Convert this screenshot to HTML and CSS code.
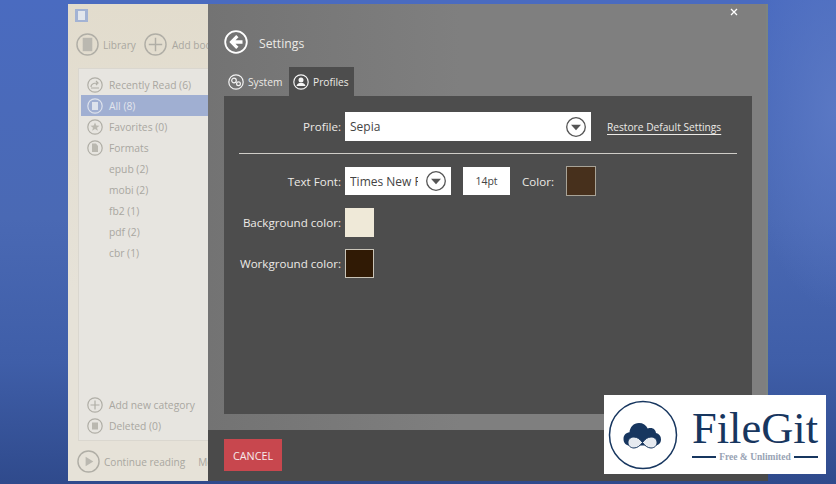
FILE: index.html
```html
<!DOCTYPE html>
<html lang="en">
<head>
<meta charset="utf-8">
<title>Settings</title>
<link rel="stylesheet" href="styles.css">
</head>
<body>
<div class="window">
  <aside class="side">
    <div class="app-icon"><span></span></div>
    <div class="tools">
      <svg class="ic22" viewBox="0 0 24 24"><circle cx="12" cy="12" r="11"/><rect class="fill" x="7" y="5" width="10" height="14"/></svg>
      <span class="tool-label">Library</span>
      <svg class="ic22 second" viewBox="0 0 24 24"><circle cx="12" cy="12" r="11"/><path d="M12 5v14M5 12h14"/></svg>
      <span class="tool-label">Add books</span>
    </div>
    <div class="list">
      <div class="row"><svg class="ic16" viewBox="0 0 16 16"><circle cx="8" cy="8" r="7.2"/><path d="M4 10c0-3 2-4 6-4M9 4l2 2-2 2M4 11h8"/></svg><span>Recently Read (6)</span></div>
      <div class="row sel"><svg class="ic16" viewBox="0 0 16 16"><circle cx="8" cy="8" r="7.2"/><rect class="fill" x="5" y="4" width="6" height="8"/></svg><span>All (8)</span></div>
      <div class="row"><svg class="ic16" viewBox="0 0 16 16"><circle cx="8" cy="8" r="7.2"/><path class="fill" d="M8 3.500l1.300 3 3.200.2-2.500 2 .9 3.100L8 10.100l-2.900 1.700.9-3.100-2.500-2 3.200-.2z"/></svg><span>Favorites (0)</span></div>
      <div class="row"><svg class="ic16" viewBox="0 0 16 16"><circle cx="8" cy="8" r="7.2"/><path class="fill" d="M5 3.500h4l2 2.500v6H5z"/></svg><span>Formats</span></div>
      <div class="row"><i></i><span>epub (2)</span></div>
      <div class="row"><i></i><span>mobi (2)</span></div>
      <div class="row"><i></i><span>fb2 (1)</span></div>
      <div class="row"><i></i><span>pdf (2)</span></div>
      <div class="row"><i></i><span>cbr (1)</span></div>
      <div class="list-end">
        <div class="row"><svg class="ic16" viewBox="0 0 16 16"><circle cx="8" cy="8" r="7.2"/><path d="M8 3.500v9M3.500 8h9"/></svg><span>Add new category</span></div>
        <div class="row"><svg class="ic16" viewBox="0 0 16 16"><circle cx="8" cy="8" r="7.2"/><rect class="fill" x="5" y="4.500" width="6" height="7"/></svg><span>Deleted (0)</span></div>
      </div>
    </div>
    <div class="foot">
      <svg class="ic22" viewBox="0 0 24 24"><circle cx="12" cy="12" r="11"/><path class="fill" d="M9 7l8 5-8 5z"/></svg>
      <span class="tool-label">Continue reading</span>
      <span class="tool-label more">More</span>
    </div>
  </aside>
  <main class="settings">
    <button class="close" aria-label="Close"><svg viewBox="0 0 8 8"><path d="M1 1l6 6M7 1l-6 6"/></svg></button>
    <header class="head">
      <svg class="back" viewBox="0 0 24 24"><circle cx="12" cy="12" r="10.800"/><path class="arrow" d="M18.500 10.300v3.400h-7l3 3-2.300 2.300L5.300 12l6.900-7 2.300 2.300-3 3z"/></svg>
      <span class="title">Settings</span>
    </header>
    <nav class="tabs">
      <div class="tab"><svg class="ic16w" viewBox="0 0 16 16"><circle cx="8" cy="8" r="7.200"/><circle cx="6" cy="6.500" r="2.300"/><circle cx="10.500" cy="9.800" r="1.900"/></svg><span>System</span></div>
      <div class="tab on"><svg class="ic16w" viewBox="0 0 16 16"><circle cx="8" cy="8" r="7.200"/><circle class="w" cx="8" cy="6" r="2.500"/><path class="w" d="M3.500 12c.5-2.500 2.500-3 4.500-3s4 .5 4.500 3z"/></svg><span>Profiles</span></div>
    </nav>
    <section class="panel">
      <div class="line first">
        <label class="lab">Profile:</label>
        <div class="select wide"><span>Sepia</span><svg class="drop" viewBox="0 0 20 20"><circle cx="10" cy="10" r="9.300"/><path d="M5 7.800h10L10 13.300z"/></svg></div>
        <a class="restore" href="#">Restore Default Settings</a>
      </div>
      <hr class="rule">
      <div class="line">
        <label class="lab">Text Font:</label>
        <div class="select font"><span class="clip">Times New Roman</span><svg class="drop" viewBox="0 0 20 20"><circle cx="10" cy="10" r="9.300"/><path d="M5 7.800h10L10 13.300z"/></svg></div>
        <div class="pt">14pt</div>
        <label class="color-lab">Color:</label>
        <div class="swatch text-c"></div>
      </div>
      <div class="line gap">
        <label class="lab">Background color:</label>
        <div class="swatch bg-c"></div>
      </div>
      <div class="line gap">
        <label class="lab">Workground color:</label>
        <div class="swatch wg-c"></div>
      </div>
    </section>
    <footer class="actions"><button class="cancel">CANCEL</button></footer>
  </main>
</div>
<div class="mark">
  <svg class="mark-logo" viewBox="0 0 72 72">
    <circle class="ring" cx="36" cy="36" r="33.500"/>
    <path class="cloud" d="M22.500 46.500c-3.500 0-6-2.500-6-6.500 0-4 2.500-6.500 6-6.800 .5-5 4-9.200 9.500-9.200 4 0 7.200 2 8.700 5.500 1-.5 2-.6 3-.6 3 0 5 2.200 5.300 5.200 3 .6 5 3 5 6.400 0 3.500-2.500 6-6 6z"/>
    <path class="inf" d="M35.500 43.500c-2.500-3.300-5.200-5.500-8.500-5.500-3.400 0-6 2.300-6 5.500 0 3.200 2.600 5.500 6 5.500 3.300 0 6-2.200 8.500-5.500 2.500-3.300 5.200-5.500 8.500-5.500 3.400 0 6 2.300 6 5.500 0 3.200-2.600 5.500-6 5.500-3.300 0-6-2.200-8.500-5.500z"/>
  </svg>
  <div class="mark-text">
    <div class="mark-name">FileGit</div>
    <div class="mark-sub"><i></i><span>Free &amp; Unlimited</span><i></i></div>
  </div>
</div>
</body>
</html>
```
FILE: styles.css
```css
* { box-sizing: border-box; }
html, body { height: 100%; }
body {
  margin: 0;
  overflow: hidden;
  font-family: "Open Sans", "Noto Sans", sans-serif;
  background:
    radial-gradient(ellipse 90px 200px at 836px 110px, #5a78c4 0%, rgba(90,120,196,0) 100%),
    linear-gradient(180deg, #4a6bc0 0%, #4a69b4 45%, #3f5ea8 75%, #2f4a8c 100%);
}
.window {
  display: flex;
  width: 700px;
  height: 477px;
  margin: 4px 0 0 68px;
}
.side {
  width: 140px;
  flex: none;
  overflow: hidden;
  background: linear-gradient(180deg, #e2dccd 0%, #e6e2d8 60%, #e6e2d8 100%);
  color: #a9a7a0;
  font-size: 10.300px;
}
.app-icon {
  width: 13px;
  height: 13px;
  margin: 5px 0 0 7px;
  background: #a3b3d4;
  padding: 2px 3px;
}
.app-icon span { display: block; height: 100%; background: #e2e6ec; }
svg circle, svg path, svg rect { fill: none; }
.ic22, .ic16 { flex: none; stroke: #b0aea6; }
.ic22 { width: 23px; height: 23px; stroke-width: 1.500; }
.ic16 { width: 16px; height: 16px; stroke-width: 1.200; margin-right: 6px; }
svg .fill { fill: #bab8b0; stroke: none; }
.tools {
  display: flex;
  align-items: center;
  margin: 11px 0 0 8px;
  height: 23px;
  width: 300px;
}
.tool-label { margin-left: 4px; white-space: nowrap; font-size: 10.100px; }
.second { margin-left: 8px; }
.tools .second + .tool-label { margin-left: 5px; }
.list {
  margin: 12px 0 0 10px;
  width: 140px;
  height: 373px;
  border: 1px solid #dad7cf;
  border-right: 0;
  background: #e7e5e0;
  padding-top: 5px;
  padding-left: 2px;
  display: flex;
  flex-direction: column;
}
.row {
  display: flex;
  align-items: center;
  height: 21px;
  padding-left: 6px;
  white-space: nowrap;
}
.row i { width: 22px; flex: none; }
.row.sel { background: #a0afd2; color: #e2e5ec; }
.row.sel .ic16 { stroke: #dde2ec; }
.row.sel .fill { fill: #dde2ec; }
.list-end { padding-bottom: 4px; margin-top: auto; }
.list-end .row:first-child { height: 20px; }
.foot {
  display: flex;
  align-items: center;
  margin: 9px 0 0 9px;
  width: 200px;
}
.foot .more { margin-left: 13px; }
.settings {
  position: relative;
  width: 560px;
  flex: none;
  display: flex;
  flex-direction: column;
  background: linear-gradient(90deg, #737373 0%, #7f7f7f 45%, #7f7f7f 100%);
  color: #eceae6;
  box-shadow: inset -2px 0 0 #7c8480;
}
.close {
  position: absolute;
  top: 4px;
  right: 30px;
  width: 8px;
  height: 8px;
  padding: 0;
  border: 0;
  background: none;
  display: block;
}
.close svg { display: block; width: 8px; height: 8px; stroke: #fff; stroke-width: 1.300; }
.head {
  display: flex;
  align-items: center;
  height: 24px;
  margin: 26px 0 0 16px;
  font-size: 12.200px;
}
.back { width: 24px; height: 24px; stroke: #fff; stroke-width: 1.800; margin-right: 11px; }
svg .arrow { fill: #fff; stroke: none; }
.title { padding-top: 2px; }
.tabs {
  display: flex;
  height: 29px;
  margin: 13px 0 0 20px;
  font-size: 10.200px;
}
.tab {
  display: flex;
  align-items: center;
  width: 65px;
}
.tab:first-child { width: 61px; }
.tab.on { background: #4d4d4d; padding-left: 4px; }
.ic16w { width: 16px; height: 16px; flex: none; stroke: #f4f4f4; stroke-width: 1.200; margin-right: 4px; }
svg .w { fill: #f4f4f4; stroke: none; }
.panel {
  width: 528px;
  height: 318px;
  margin-left: 16px;
  background: #4d4d4d;
  padding: 16px 15px 0;
  flex: none;
  font-size: 11.600px;
}
.line { display: flex; align-items: center; }
.gap { margin-top: 12px; }
.lab { width: 102px; flex: none; text-align: right; margin-right: 4px; white-space: nowrap; }
.select {
  display: flex;
  align-items: center;
  justify-content: space-between;
  background: #fff;
  color: #444;
  padding: 0 5px 0 5px;
  font-size: 12px;
}
.wide { width: 246px; height: 29px; }
.font { width: 106px; height: 28px; }
.clip { width: 68px; overflow: hidden; white-space: nowrap; }
.drop { width: 20px; height: 20px; flex: none; stroke: #555; stroke-width: 1.300; }
svg.drop path { fill: #555; stroke: none; }
.restore {
  margin-left: 16px;
  color: #eceae6;
  font-size: 10.200px;
  text-decoration: underline;
  text-underline-offset: 3px;
  white-space: nowrap;
}
.rule {
  height: 1px;
  border: 0;
  margin: 12px 0 12px;
  width: 498px;
  background: #cfcdc8;
}
.pt {
  width: 47px;
  height: 28px;
  margin-left: 12px;
  background: #fff;
  color: #444;
  font-size: 10.500px;
  display: flex;
  align-items: center;
  justify-content: center;
}
.color-lab { margin-left: 12px; width: 44px; }
.swatch { width: 30px; height: 30px; border: 1px solid #a8a397; flex: none; }
.bg-c { background: #efe9d8; border-color: #efe9d8; width: 29px; height: 29px; }
.wg-c { background: #301a05; border-color: #c9c4b8; width: 29px; height: 29px; }
.text-c { background: #47301c; }
.actions {
  margin-top: 16px;
  flex: 1;
  background: #4a4a4a;
  padding: 9px 0 0 16px;
}
.cancel {
  width: 58px;
  height: 32px;
  border: 0;
  background: #c8474e;
  color: #f6eaea;
  font: 10.800px "Open Sans", sans-serif;
  padding: 0;
}
.mark {
  position: absolute;
  left: 604px;
  top: 395px;
  width: 222px;
  height: 79px;
  background: #fff;
  display: flex;
  align-items: center;
  color: #17365f;
}
.mark-logo { width: 72px; height: 72px; margin-left: 3px; flex: none; }
.ring { stroke: #17365f; stroke-width: 1.500; }
svg .cloud { fill: #17365f; }
svg .inf { fill: #e6eaf0; stroke: #17365f; stroke-width: 1; }
.mark-text { margin-left: 13px; width: 126px; }
.mark-name {
  font-family: "Liberation Serif", serif;
  font-size: 44.500px;
  line-height: 46px;
  margin-top: -3px;
  white-space: nowrap;
}
.mark-sub {
  display: flex;
  align-items: center;
  gap: 3px;
  font-family: "Liberation Serif", serif;
  font-size: 9.500px;
  font-weight: bold;
  color: #98a3b4;
  white-space: nowrap;
  margin-top: 1px;
}
.mark-sub i { flex: 1; height: 2px; background: #17365f; }
```
